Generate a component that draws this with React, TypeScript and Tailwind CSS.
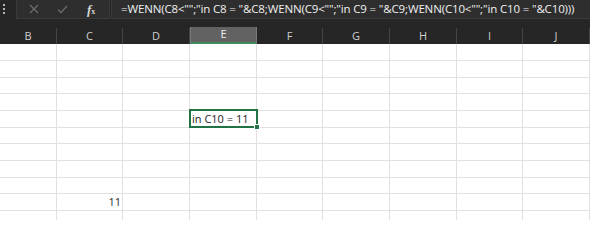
import React from "react";

const cols = [
    { name: "B", w: "w-[57px]" },
    { name: "C", w: "w-[66px]" },
    { name: "D", w: "w-[67px]" },
    { name: "E", w: "w-[67px]" },
    { name: "F", w: "w-[66px]" },
    { name: "G", w: "w-[67px]" },
    { name: "H", w: "w-[67px]" },
    { name: "I", w: "w-[66px]" },
    { name: "J", w: "w-[67px]" },
];

// row heights follow the 2/3-scaled grid: 17, 17, 16 ...
const rows = Array.from({ length: 11 }, (_, i) => (i % 3 === 2 ? "h-[16px]" : "h-[17px]"));

const formula = '=WENN(C8<"";"in C8 = "&C8;WENN(C9<"";"in C9 = "&C9;WENN(C10<"";"in C10 = "&C10)))';

function FormulaBar() {
    return (
        <div className="flex h-[27px] bg-[#262626]">
            <div className="flex w-[16px] shrink-0 flex-col items-start gap-[2px] pl-[3px] pt-[4px]">
                <span className="h-[2px] w-[2px] bg-[#b5b5b5]" />
                <span className="h-[2px] w-[2px] bg-[#b5b5b5]" />
                <span className="h-[2px] w-[2px] bg-[#b5b5b5]" />
            </div>
            <div className="flex h-[19px] w-[94px] shrink-0 items-center border border-t-0 border-[#3a3a3a] bg-[#2e2e2e]">
                <svg className="ml-[12px]" width="10" height="10" viewBox="0 0 10 10">
                    <path d="M1 1 L9 9 M9 1 L1 9" stroke="#6b6b6b" strokeWidth="1.3" />
                </svg>
                <svg className="ml-[18px]" width="11" height="9" viewBox="0 0 11 9">
                    <path d="M1 4.5 L4 7.5 L10 1" stroke="#6b6b6b" strokeWidth="1.3" fill="none" />
                </svg>
                <span
                    className="ml-[19px] text-[13px] italic font-bold leading-none text-[#d6d6d6]"
                    style={{ fontFamily: '"Liberation Serif", serif' }}
                >
                    f<span className="text-[8px] not-italic">x</span>
                </span>
            </div>
            <div className="ml-[1px] flex h-[19px] min-w-0 flex-1 items-center overflow-hidden border border-t-0 border-r-0 border-[#3a3a3a] bg-[#2e2e2e] pl-[9px]">
                <span className="whitespace-nowrap text-[11.5px] tracking-[-0.15px] text-[#f0f0f0]">{formula}</span>
            </div>
        </div>
    );
}

function HeaderRow() {
    return (
        <div className="flex h-[17px] bg-[#262626]">
            {cols.map((c) => (
                <div
                    key={c.name}
                    className={`${c.w} relative flex shrink-0 items-center justify-center text-[11px] ${
                        c.name === "E"
                            ? "border-x border-[#7a7a7a] border-b-2 border-b-[#3f8a5e] bg-[#626262] text-[#f2f2f2]"
                            : "border-r border-[#444444] mt-[1px] text-[#cfcfcf]"
                    }`}
                >
                    {c.name}
                </div>
            ))}
        </div>
    );
}

export default function App() {
    return (
        <div
            className="h-[220px] w-[590px] overflow-hidden bg-white"
            style={{ fontFamily: '"Open Sans", "Noto Sans", sans-serif' }}
        >
            <FormulaBar />
            <HeaderRow />
            <div className="flex flex-col">
                {rows.map((h, r) => (
                    <div key={r} className={`flex ${h} shrink-0`}>
                        {cols.map((c) => (
                            <div
                                key={c.name}
                                className={`${c.w} relative shrink-0 border-b border-r border-[#e1e1e1] text-[11px] leading-none text-[#222222]`}
                            >
                                {r === 9 && c.name === "C" && (
                                    <span className="absolute bottom-[3px] right-[1px] font-medium text-[#2a2a2a]">11</span>
                                )}
                                {r === 4 && c.name === "E" && (
                                    <>
                                        <span className="absolute bottom-[3px] left-[2px] z-10 whitespace-nowrap font-medium">in C10 = 11</span>
                                        <div className="absolute -left-[1px] -top-[2px] z-20 h-[19px] w-[69px] border-2 border-[#217346]">
                                            <div className="absolute -bottom-[4px] -right-[4px] h-[6px] w-[6px] border border-white bg-[#217346]" />
                                        </div>
                                    </>
                                )}
                            </div>
                        ))}
                    </div>
                ))}
            </div>
        </div>
    );
}
